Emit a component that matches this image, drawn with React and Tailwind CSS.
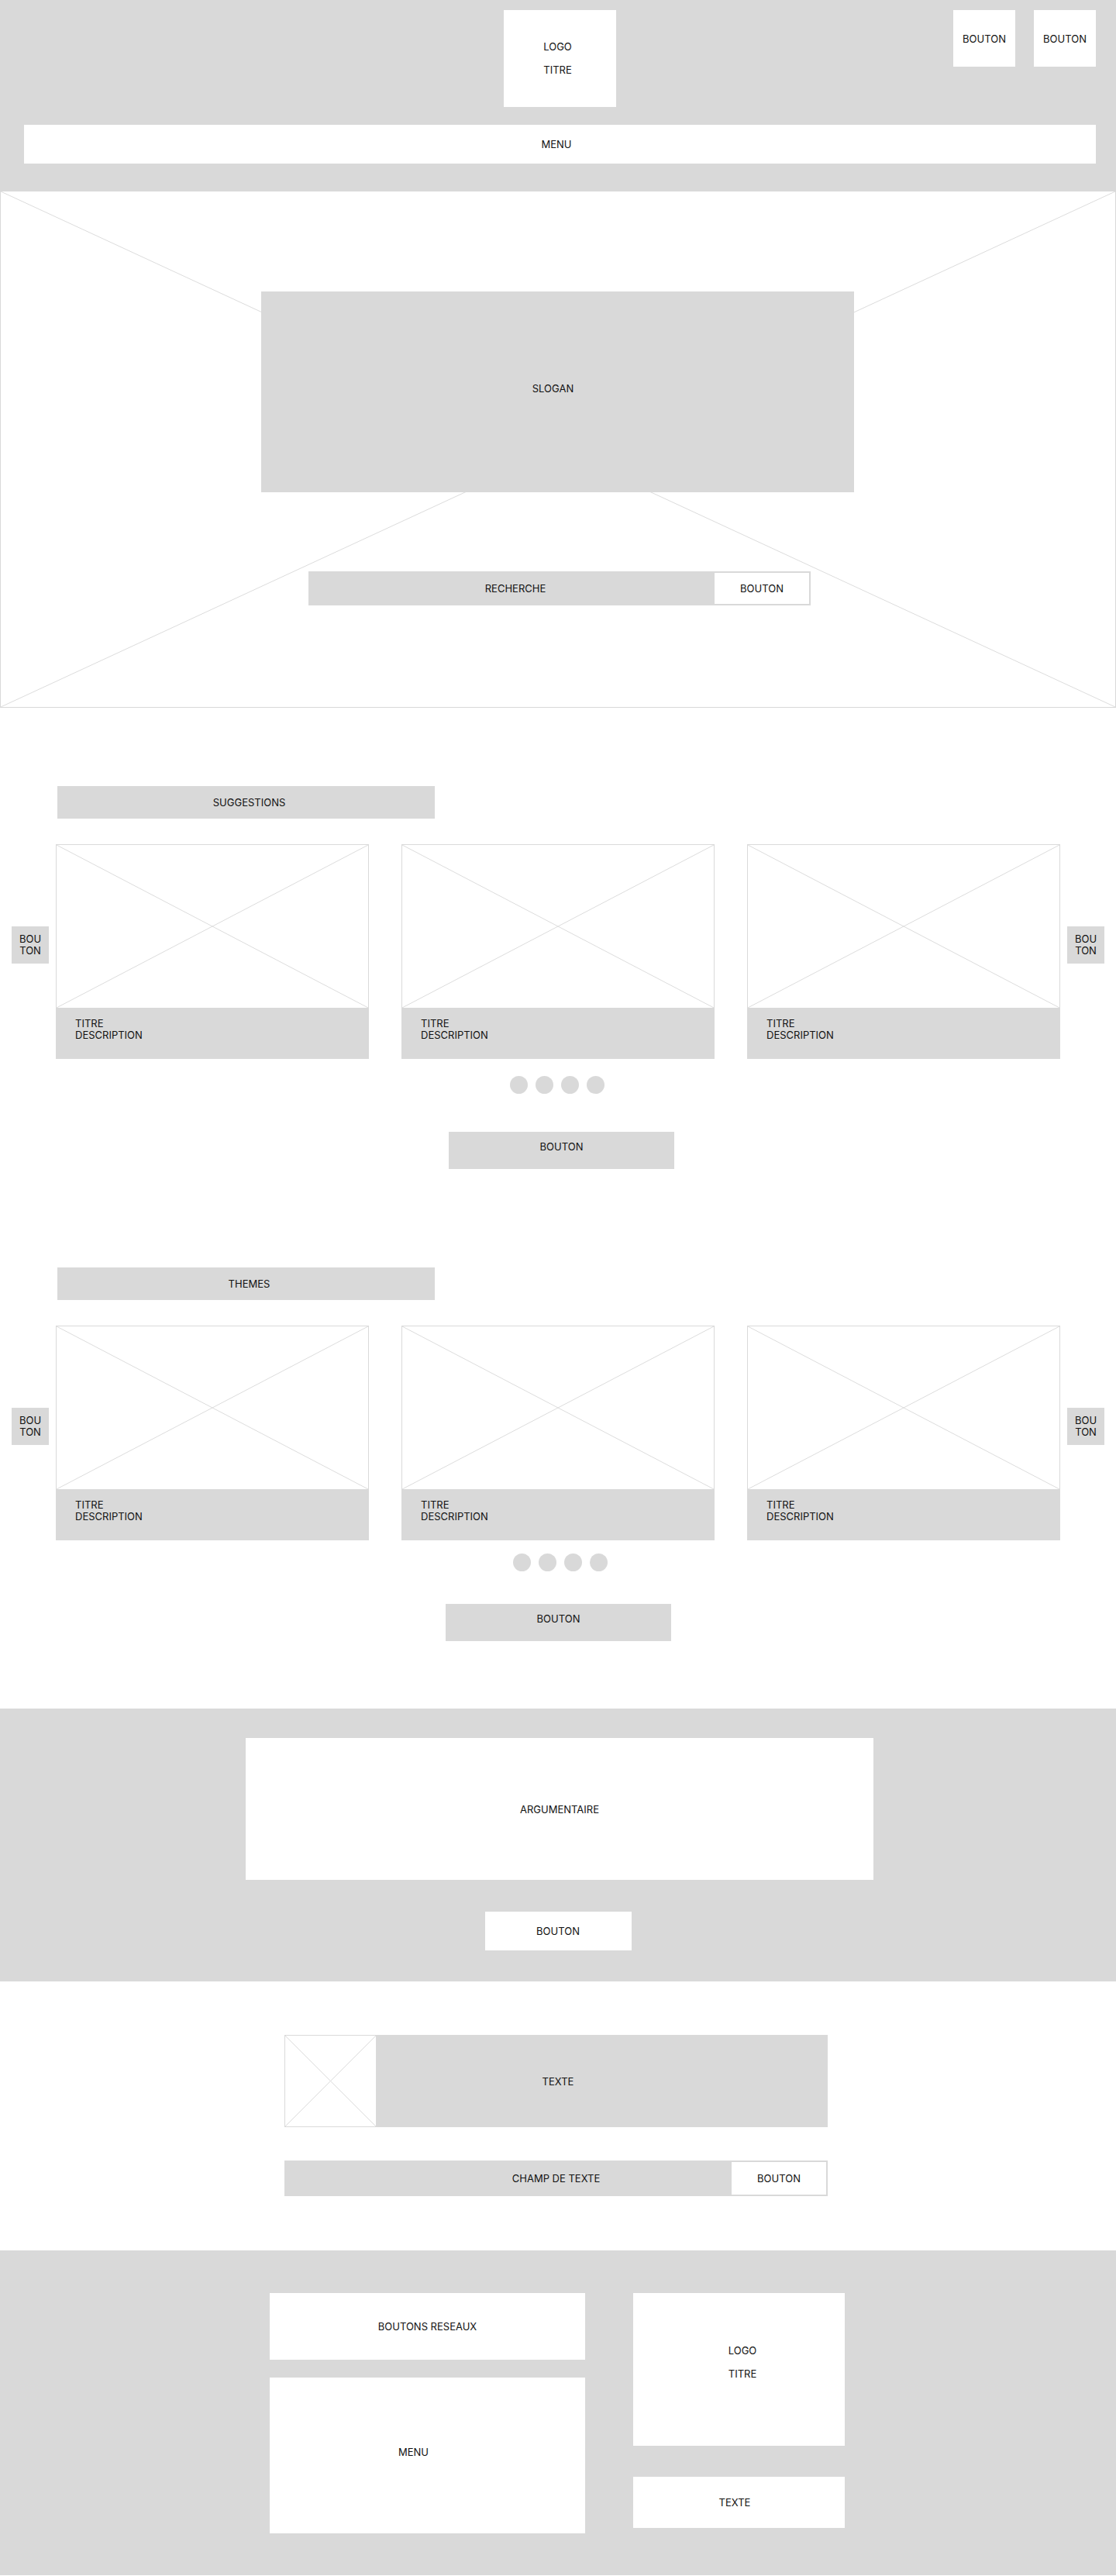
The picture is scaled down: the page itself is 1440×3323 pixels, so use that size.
import React from 'react';

const GRAY = 'bg-[#d9d9d9]';

// X drawn corner to corner, used as image placeholder
const Cross = () => (
  <svg
    className="absolute inset-0 h-full w-full"
    viewBox="0 0 100 100"
    preserveAspectRatio="none"
  >
    <line x1="0" y1="0" x2="100" y2="100" stroke="#dcdcdc" strokeWidth="1" vectorEffect="non-scaling-stroke" />
    <line x1="100" y1="0" x2="0" y2="100" stroke="#dcdcdc" strokeWidth="1" vectorEffect="non-scaling-stroke" />
  </svg>
);

const Card = () => (
  <div className="flex flex-col">
    <div className="relative h-[211px] border border-b-0 border-[#dadada] bg-white">
      <Cross />
    </div>
    <div className={`h-[66px] ${GRAY} pl-[25px] pt-[13px] leading-[15px]`}>
      <p>TITRE</p>
      <p>DESCRIPTION</p>
    </div>
  </div>
);

const SideButton = () => (
  <div className={`mt-[106px] flex h-[48px] w-[48px] shrink-0 items-center justify-center ${GRAY} text-center leading-[15px]`}>
    BOU
    <br />
    TON
  </div>
);

const Carousel = ({ label, dotsGap, dotsShift, buttonGap, buttonLeft }) => (
  <div>
    <div className={`ml-[74px] flex h-[42px] w-[487px] items-center justify-center ${GRAY} pl-[8px]`}>
      {label}
    </div>

    <div className="mt-[33px] flex items-start">
      <div className="ml-[15px]">
        <SideButton />
      </div>
      <div className="ml-[9px] grid w-[1296px] grid-cols-3 gap-x-[42px]">
        <Card />
        <Card />
        <Card />
      </div>
      <div className="ml-[9px]">
        <SideButton />
      </div>
    </div>

    {/* pagination */}
    <div className={`flex justify-center gap-[10px] ${dotsGap} ${dotsShift}`}>
      {[0, 1, 2, 3].map(i => (
        <span key={i} className={`h-[23px] w-[23px] rounded-full ${GRAY}`} />
      ))}
    </div>

    <div className={`${buttonGap} ${buttonLeft} h-[48px] w-[291px] ${GRAY} pt-[11px] text-center leading-[16px]`}>
      BOUTON
    </div>
  </div>
);

export default function App() {
  return (
    <div className="w-[1440px] bg-white font-['Inter','Liberation_Sans',sans-serif] text-[13px] leading-[16px] text-[#111111]">
      {/* Header */}
      <header className={`h-[246px] ${GRAY} pt-[13px]`}>
        <div className="flex items-start">
          <div className="ml-[650px] flex h-[125px] w-[145px] flex-col items-center gap-[14px] bg-white pr-[6px] pt-[39px]">
            <span>LOGO</span>
            <span>TITRE</span>
          </div>
          <div className="ml-auto mr-[26px] flex gap-[24px]">
            <div className="flex h-[73px] w-[80px] items-center justify-center bg-white">BOUTON</div>
            <div className="flex h-[73px] w-[80px] items-center justify-center bg-white">BOUTON</div>
          </div>
        </div>
        <div className="ml-[31px] mr-[26px] mt-[23px] flex h-[50px] items-center justify-center bg-white pr-[9px]">
          MENU
        </div>
      </header>

      {/* Hero */}
      <section className="relative flex h-[667px] flex-col border border-[#d9d9d9] pt-[129px]">
        <Cross />
        <div className={`relative ml-[336px] flex h-[259px] w-[765px] items-center justify-center ${GRAY} pb-[9px] pr-[12px]`}>
          SLOGAN
        </div>
        <div className={`relative ml-[397px] mt-[102px] flex h-[44px] w-[648px] ${GRAY}`}>
          <div className="flex flex-1 items-center justify-center pl-[12px]">RECHERCHE</div>
          <div className="flex w-[126px] items-center justify-center border-2 border-[#d9d9d9] bg-white">
            BOUTON
          </div>
        </div>
      </section>

      {/* Suggestions */}
      <section className="pt-[101px]">
        <Carousel
          label="SUGGESTIONS"
          dotsGap="mt-[22px]"
          dotsShift="ml-[-3px]"
          buttonGap="mt-[49px]"
          buttonLeft="ml-[579px]"
        />
      </section>

      {/* Themes */}
      <section className="pt-[127px]">
        <Carousel
          label="THEMES"
          dotsGap="mt-[17px]"
          dotsShift="ml-[5px]"
          buttonGap="mt-[42px]"
          buttonLeft="ml-[575px]"
        />
      </section>

      {/* Argumentaire */}
      <section className={`mt-[87px] flex h-[352px] flex-col items-center ${GRAY} pt-[38px]`}>
        <div className="ml-[4px] flex h-[183px] w-[810px] items-center justify-center bg-white">
          ARGUMENTAIRE
        </div>
        <div className="mt-[41px] flex h-[50px] w-[189px] items-center justify-center bg-white">
          BOUTON
        </div>
      </section>

      {/* Texte + champ */}
      <section className="flex flex-col pl-[367px] pt-[69px]">
        <div className={`flex h-[119px] w-[701px] ${GRAY}`}>
          <div className="relative h-[119px] w-[119px] shrink-0 border border-[#dadada] bg-white">
            <Cross />
          </div>
          <div className="flex flex-1 items-center justify-center pr-[114px]">TEXTE</div>
        </div>
        <div className={`mt-[43px] flex h-[46px] w-[701px] ${GRAY}`}>
          <div className="flex flex-1 items-center justify-center pl-[126px]">CHAMP DE TEXTE</div>
          <div className="flex w-[126px] items-center justify-center border-2 border-[#d9d9d9] bg-white">
            BOUTON
          </div>
        </div>
      </section>

      {/* Footer */}
      <footer className={`mt-[70px] flex h-[419px] gap-[62px] ${GRAY} pl-[348px] pt-[55px]`}>
        <div className="flex w-[407px] flex-col gap-[23px]">
          <div className="flex h-[86px] items-center justify-center bg-white">BOUTONS RESEAUX</div>
          <div className="flex h-[201px] items-center justify-center bg-white pb-[9px] pr-[36px]">MENU</div>
        </div>
        <div className="flex w-[273px] flex-col gap-[40px]">
          <div className="flex h-[197px] flex-col items-center gap-[14px] bg-white pl-[9px] pt-[66px]">
            <span>LOGO</span>
            <span>TITRE</span>
          </div>
          <div className="flex h-[66px] items-center justify-center bg-white pr-[11px]">TEXTE</div>
        </div>
      </footer>
    </div>
  );
}
